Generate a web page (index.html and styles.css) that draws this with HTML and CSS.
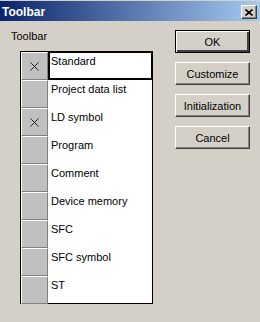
FILE: index.html
```html
<!DOCTYPE html>
<html lang="en">
<head>
    <meta charset="UTF-8">
    <title>Toolbar</title>
    <link rel="stylesheet" href="styles.css">
</head>
<body>
    <div class="window">
        <div class="titlebar">
            <span class="title">Toolbar</span>
            <button class="close-btn" aria-label="Close">
                <svg width="8" height="7" viewBox="0 0 8 7"><path d="M0.5 0.5 L7.5 6.5 M7.5 0.5 L0.5 6.5" stroke="#000" stroke-width="1.6" fill="none"/></svg>
            </button>
        </div>
        <div class="content">
            <div class="left-col">
                <div class="group-label">Toolbar</div>
                <div class="list">
                    <div class="row">
                        <div class="check"><svg width="9" height="9" viewBox="0 0 9 9"><path d="M0.5 0.5 L8.5 8.5 M8.5 0.5 L0.5 8.5" stroke="#222" stroke-width="1" fill="none"/></svg></div>
                        <div class="name focused">Standard</div>
                    </div>
                    <div class="row">
                        <div class="check"></div>
                        <div class="name">Project data list</div>
                    </div>
                    <div class="row">
                        <div class="check"><svg width="9" height="9" viewBox="0 0 9 9"><path d="M0.5 0.5 L8.5 8.5 M8.5 0.5 L0.5 8.5" stroke="#222" stroke-width="1" fill="none"/></svg></div>
                        <div class="name">LD symbol</div>
                    </div>
                    <div class="row">
                        <div class="check"></div>
                        <div class="name">Program</div>
                    </div>
                    <div class="row">
                        <div class="check"></div>
                        <div class="name">Comment</div>
                    </div>
                    <div class="row">
                        <div class="check"></div>
                        <div class="name">Device memory</div>
                    </div>
                    <div class="row">
                        <div class="check"></div>
                        <div class="name">SFC</div>
                    </div>
                    <div class="row">
                        <div class="check"></div>
                        <div class="name">SFC symbol</div>
                    </div>
                    <div class="row">
                        <div class="check"></div>
                        <div class="name">ST</div>
                    </div>
                </div>
            </div>
            <div class="buttons">
                <button class="btn default">OK</button>
                <button class="btn">Customize</button>
                <button class="btn">Initialization</button>
                <button class="btn">Cancel</button>
            </div>
        </div>
    </div>
</body>
</html>
```
FILE: styles.css
```css
body {
    margin: 0;
    padding: 0;
    background-color: #d4d0c8;
    font-family: "Liberation Sans", Arial, sans-serif;
    font-size: 11px;
    color: #000;
}

.window {
    width: 260px;
    height: 322px;
    padding-top: 1px;
    box-sizing: border-box;
}

.titlebar {
    height: 20px;
    background: linear-gradient(to right, #0a246a, #a6caf0);
    display: flex;
    justify-content: space-between;
    align-items: center;
    padding: 0 3px 0 2px;
}

.title {
    color: #fff;
    font-weight: bold;
    font-size: 12px;
    margin-top: 1px;
}

.close-btn {
    width: 16px;
    height: 14px;
    padding: 0;
    margin-top: 2px;
    background-color: #d4d0c8;
    border: 1px solid;
    border-color: #fff #404040 #404040 #fff;
    box-shadow: inset -1px -1px 0 #808080;
    display: flex;
    align-items: center;
    justify-content: center;
}

.content {
    display: flex;
    justify-content: space-between;
    padding: 9px 10px 0 11px;
}

.group-label {
    line-height: 13px;
}

.list {
    margin: 8px 0 0 9px;
    width: 131px;
    height: 251px;
    border: 1px solid #000;
    background-color: #fff;
}

.row {
    display: flex;
    height: 28px;
}

.check {
    width: 25px;
    height: 26px;
    background-color: #c0c0c0;
    border: 1px solid;
    border-color: #fff #808080 #808080 #fff;
    display: flex;
    align-items: center;
    justify-content: center;
}

.name {
    flex: 1;
    padding: 3px 3px 0 3px;
    line-height: 13px;
}

.focused {
    box-shadow: inset 0 0 0 2px #000;
    margin: -1px -1px 0 0;
    padding-top: 4px;
}

.buttons {
    display: flex;
    flex-direction: column;
    gap: 9px;
}

.btn {
    width: 75px;
    height: 23px;
    padding: 0;
    font-family: "Liberation Sans", Arial, sans-serif;
    font-size: 11px;
    color: #000;
    background-color: #d4d0c8;
    border: 1px solid;
    border-color: #fff #404040 #404040 #fff;
    box-shadow: inset -1px -1px 0 #808080;
}

.btn.default {
    border-color: #000;
    box-shadow: inset 1px 1px 0 #fff, inset -2px -2px 0 #404040;
}
```
